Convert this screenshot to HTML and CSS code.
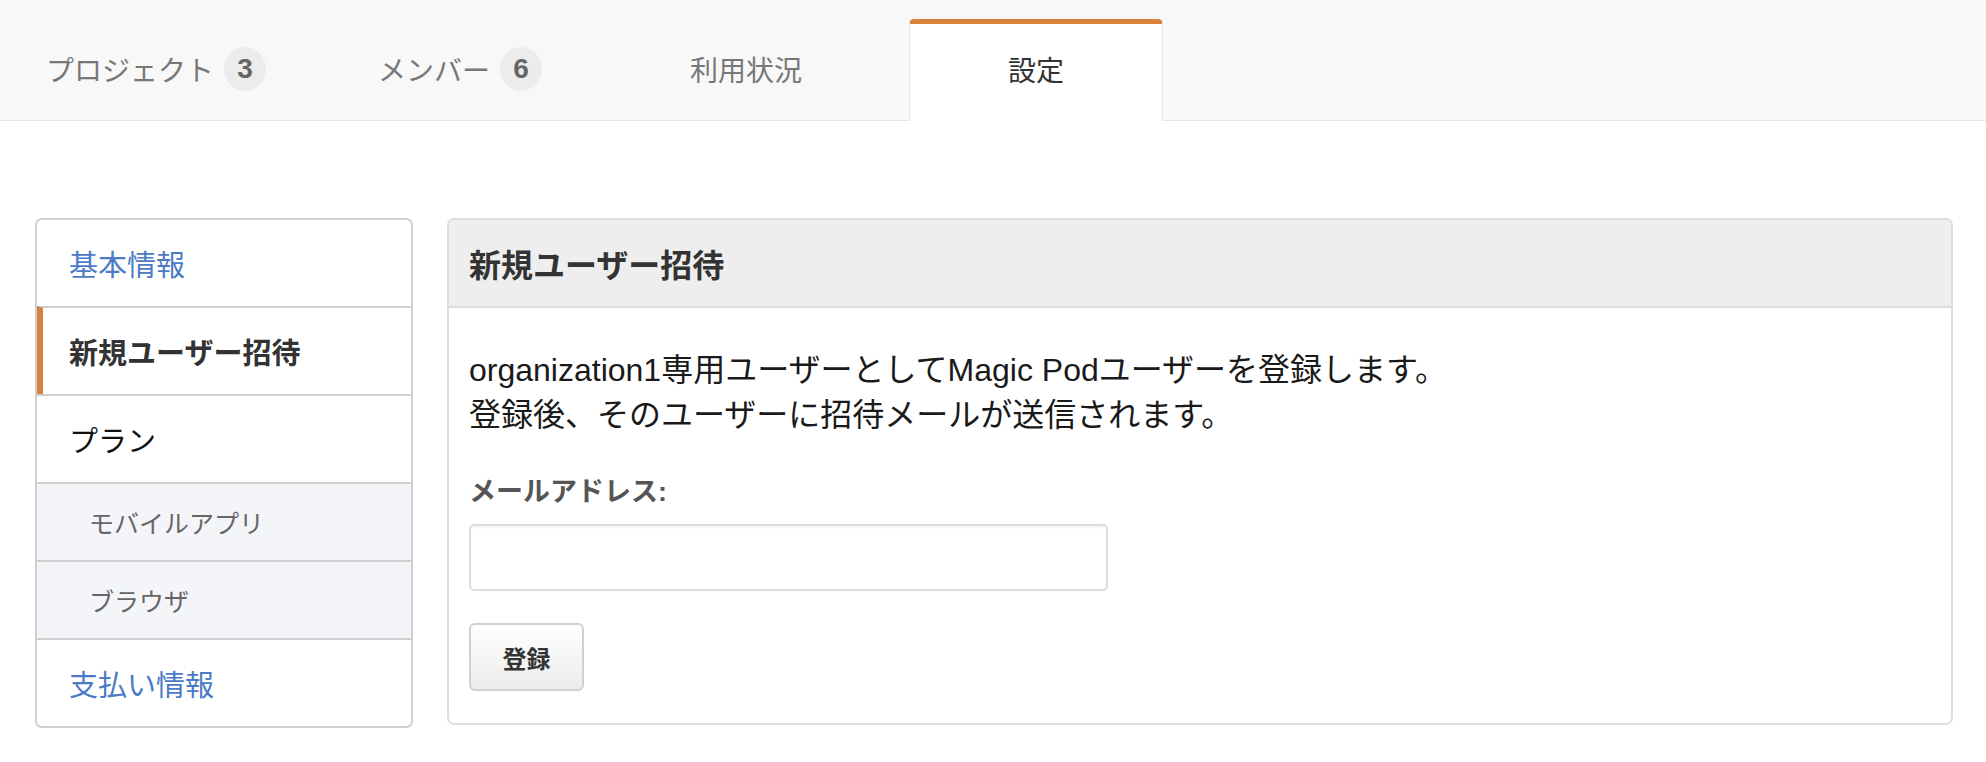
FILE: index.html
```html
<!DOCTYPE html>
<html lang="ja">
<head>
<meta charset="utf-8">
<title>設定</title>
<link rel="stylesheet" href="styles.css">
</head>
<body>
<nav class="tabbar">
  <a class="tab">プロジェクト<span class="badge">3</span></a>
  <a class="tab">メンバー<span class="badge">6</span></a>
  <a class="tab">利用状況</a>
  <a class="tab active">設定</a>
</nav>
<main class="content">
  <aside class="sidenav">
    <a class="nav-item link">基本情報</a>
    <a class="nav-item current">新規ユーザー招待</a>
    <a class="nav-item plain">プラン</a>
    <a class="nav-item sub">モバイルアプリ</a>
    <a class="nav-item sub">ブラウザ</a>
    <a class="nav-item link">支払い情報</a>
  </aside>
  <section class="panel">
    <header class="panel-head">新規ユーザー招待</header>
    <div class="panel-body">
      <p class="intro">organization1専用ユーザーとしてMagic Podユーザーを登録します。<br>登録後、そのユーザーに招待メールが送信されます。</p>
      <label class="field-label" for="email">メールアドレス:</label>
      <input class="field-input" id="email" type="text">
      <button class="btn" type="button">登録</button>
    </div>
  </section>
</main>
</body>
</html>
```

FILE: styles.css
```css
* { box-sizing: border-box; }
html, body { margin: 0; padding: 0; background: #fff; }
body {
  font-family: "Liberation Sans", "Noto Sans CJK JP", sans-serif;
  color: #222;
}

.tabbar {
  display: flex;
  gap: 36px;
  height: 121px;
  padding-left: 39px;
  background: #f8f8f8;
  border-bottom: 1px solid #e6e6e6;
}
.tab {
  width: 254px;
  margin-top: 19px;
  height: 102px;
  padding-bottom: 8px;
  display: flex;
  align-items: center;
  justify-content: center;
  gap: 10px;
  font-size: 28px;
  color: #777;
  border-top: 5px solid transparent;
  border-left: 1px solid transparent;
  border-right: 1px solid transparent;
  border-radius: 5px 5px 0 0;
}
.tab:first-child { padding-right: 20px; }
.tab:nth-child(2) { padding-left: 8px; }
.tab.active {
  background: #fff;
  color: #333;
  border-top-color: #d9823b;
  border-left-color: #e8e8e8;
  border-right-color: #e8e8e8;
}
.badge {
  display: inline-flex;
  align-items: center;
  justify-content: center;
  width: 42px;
  height: 44px;
  border-radius: 50%;
  background: #ececec;
  color: #666;
  font-weight: bold;
  font-size: 28px;
}

.content {
  display: flex;
  align-items: flex-start;
  gap: 34px;
  padding: 97px 33px 0 35px;
}

.sidenav {
  width: 378px;
  flex: none;
  display: flex;
  flex-direction: column;
  border: 2px solid #cfcfcf;
  border-radius: 7px;
  overflow: hidden;
}
.nav-item {
  display: flex;
  align-items: center;
  height: 88px;
  padding-left: 32px;
  font-size: 29px;
  border-top: 2px solid #cfcfcf;
}
.nav-item:first-child { border-top: none; height: 86px; }
.nav-item.link { color: #4a7bc4; }
.nav-item.current {
  font-weight: bold;
  color: #333;
  border-left: 6px solid #d9823b;
  padding-left: 26px;
}
.nav-item.plain { color: #111; }
.nav-item.sub {
  height: 78px;
  padding-left: 52px;
  font-size: 25px;
  color: #666;
  background: #f4f5f9;
}

.panel {
  flex: 1;
  border: 2px solid #dedede;
  border-radius: 7px;
  overflow: hidden;
}
.panel-head {
  height: 88px;
  display: flex;
  align-items: center;
  padding-left: 20px;
  background: #eeeeee;
  border-bottom: 2px solid #dedede;
  font-size: 32px;
  font-weight: bold;
  color: #333;
}
.panel-body {
  display: flex;
  flex-direction: column;
  align-items: flex-start;
  padding: 40px 20px 32px;
}
.intro {
  margin: 0;
  font-size: 32px;
  line-height: 45px;
  color: #1a1a1a;
}
.field-label {
  margin-top: 36px;
  font-size: 27px;
  line-height: 36px;
  font-weight: bold;
  color: #555;
}
.field-input {
  margin-top: 14px;
  width: 639px;
  height: 67px;
  border: 2px solid #dcdcdc;
  border-radius: 5px;
  background: #fff;
  box-shadow: inset 0 2px 2px rgba(0,0,0,0.04);
}
.btn {
  margin-top: 32px;
  width: 115px;
  height: 68px;
  border: 2px solid #d0d0d0;
  border-radius: 6px;
  background: linear-gradient(#ffffff, #ececec);
  font-family: inherit;
  font-size: 24px;
  font-weight: bold;
  color: #333;
}
```
